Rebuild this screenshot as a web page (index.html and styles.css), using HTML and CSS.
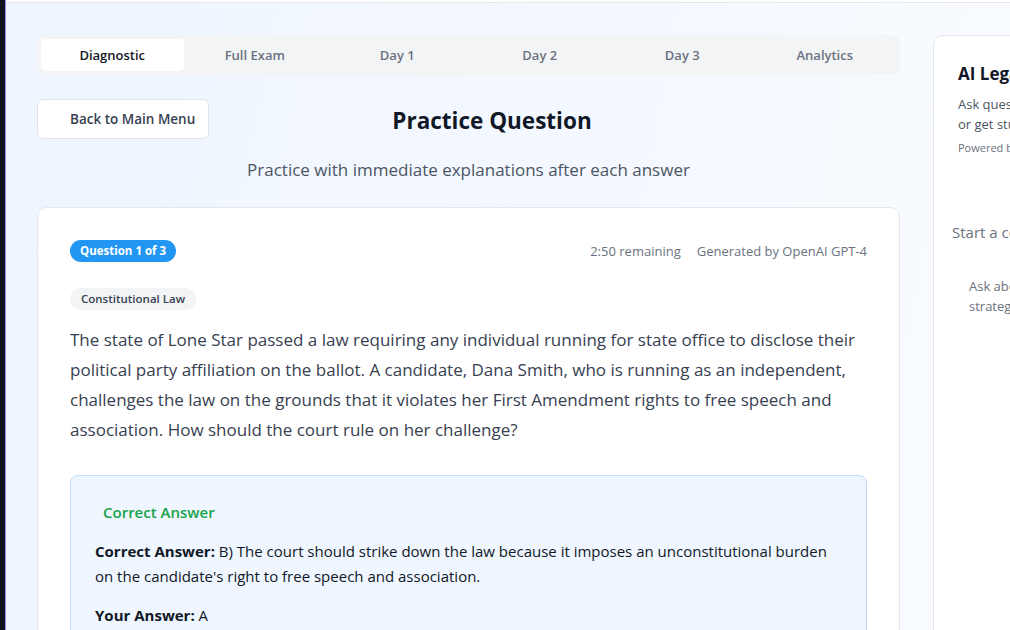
FILE: index.html
```html
<!DOCTYPE html>
<html lang="en">
<head>
<meta charset="utf-8">
<title>Practice Question</title>
<link rel="stylesheet" href="styles.css">
</head>
<body>
<div class="edge-dark"></div>
<div class="edge-accent"></div>
<div class="page">
  <div class="layout">
    <main class="main">
      <nav class="tabs">
        <div class="tab active">Diagnostic</div>
        <div class="tab">Full Exam</div>
        <div class="tab">Day 1</div>
        <div class="tab">Day 2</div>
        <div class="tab">Day 3</div>
        <div class="tab">Analytics</div>
      </nav>
      <div class="header">
        <button class="back-btn">Back to Main Menu</button>
        <h1 class="title">Practice Question</h1>
        <div class="spacer"></div>
      </div>
      <p class="subtitle">Practice with immediate explanations after each answer</p>
      <section class="card">
        <div class="card-head">
          <span class="badge">Question 1 of 3</span>
          <div class="meta">
            <span>2:50 remaining</span>
            <span>Generated by OpenAI GPT-4</span>
          </div>
        </div>
        <span class="chip">Constitutional Law</span>
        <p class="question">The state of Lone Star passed a law requiring any individual running for state office to disclose their political party affiliation on the ballot. A candidate, Dana Smith, who is running as an independent, challenges the law on the grounds that it violates her First Amendment rights to free speech and association. How should the court rule on her challenge?</p>
        <div class="answer">
          <div class="answer-title">Correct Answer</div>
          <p class="answer-line"><strong>Correct Answer:</strong> B) The court should strike down the law because it imposes an unconstitutional burden on the candidate's right to free speech and association.</p>
          <p class="answer-line"><strong>Your Answer:</strong> A</p>
        </div>
      </section>
    </main>
    <aside class="sidebar">
      <div class="side-head">
        <h2 class="side-title">AI Legal Tutor</h2>
        <p class="side-desc">Ask questions about legal concepts and cases,<br>or get study tips</p>
        <p class="side-powered">Powered by OpenAI</p>
      </div>
      <div class="side-body">
        <p class="side-start">Start a conversation with your tutor</p>
        <p class="side-hint">Ask about legal concepts, cases, or exam<br>strategies</p>
      </div>
    </aside>
  </div>
</div>
</body>
</html>
```
FILE: styles.css
```css
* { box-sizing: border-box; }
html, body { height: 100%; }
body {
  margin: 0;
  display: flex;
  overflow: hidden;
  font-family: "Open Sans", "Noto Sans", sans-serif;
  color: #111827;
}
.edge-dark { width: 5px; flex-shrink: 0; background: #12121c; }
.edge-accent { width: 1px; flex-shrink: 0; background: #9d8cf5; }
.page {
  flex: 1;
  min-width: 0;
  border-top: 2px solid #ffffff;
  background: linear-gradient(100deg, #eef5ff 0%, #f4f8ff 50%, #f9fbff 100%);
}
.layout {
  border-top: 1px solid #e6e8ec;
  display: flex;
  gap: 33px;
  padding: 32px 0 0 31px;
}
.main { width: 863px; flex-shrink: 0; }
.tabs {
  display: grid;
  grid-template-columns: repeat(6, 1fr);
  background: #f3f4f6;
  border-radius: 8px;
  padding: 4px;
  height: 40px;
}
.tab {
  display: flex;
  align-items: center;
  justify-content: center;
  font-size: 13px;
  font-weight: 600;
  color: #6b7280;
  border-radius: 5px;
}
.tab.active { background: #ffffff; color: #111827; }
.header {
  display: grid;
  grid-template-columns: auto 1fr 125px;
  align-items: center;
  margin-top: 24px;
}
.back-btn {
  height: 40px;
  width: 172px;
  background: #ffffff;
  border: 1px solid #e2e5ea;
  border-radius: 6px;
  padding: 0 0 1px 32px;
  text-align: left;
  font-family: inherit;
  font-size: 13.5px;
  font-weight: 600;
  color: #374151;
}
.title {
  margin: 0;
  text-align: center;
  font-size: 22.5px;
  font-weight: 700;
  color: #111827;
  line-height: 32px;
  padding-top: 3px;
}
.subtitle {
  margin: 19px 0 0;
  text-align: center;
  font-size: 17px;
  line-height: 24px;
  color: #4b5563;
}
.card {
  margin-top: 25px;
  background: #ffffff;
  border: 1px solid #e5e7eb;
  border-radius: 10px;
  padding: 32px 32px 40px;
}
.card-head {
  display: flex;
  align-items: center;
  justify-content: space-between;
}
.badge {
  background: #2196f3;
  color: #ffffff;
  font-size: 11.5px;
  font-weight: 700;
  height: 22px;
  line-height: 22px;
  padding: 0 10px;
  border-radius: 11px;
}
.meta { display: flex; gap: 16px; font-size: 13px; color: #6b7280; }
.chip {
  display: inline-block;
  margin-top: 26px;
  background: #f3f4f6;
  color: #374151;
  font-size: 11.5px;
  font-weight: 600;
  height: 22px;
  line-height: 22px;
  padding: 0 11px;
  border-radius: 11px;
}
.question {
  margin: 15px 0 0;
  font-size: 17px;
  line-height: 30px;
  color: #374151;
}
.answer {
  margin-top: 30px;
  background: #eff6ff;
  border: 1px solid #bfdbfe;
  border-radius: 8px;
  padding: 24px;
  height: 200px;
}
.answer-title {
  padding-left: 8px;
  font-size: 15px;
  font-weight: 600;
  line-height: 24px;
  color: #16a34a;
}
.answer-line {
  margin: 15px 0 0;
  font-size: 15px;
  line-height: 25px;
  color: #111827;
}
.answer-line + .answer-line { margin-top: 14px; }
.answer-line strong { font-weight: 700; }
.sidebar {
  width: 330px;
  flex-shrink: 0;
  background: #ffffff;
  border: 1px solid #e5e7eb;
  border-radius: 10px;
  height: 640px;
}
.side-head { padding: 24px 24px 20px; }
.side-title {
  margin: 0;
  font-size: 17px;
  font-weight: 700;
  line-height: 28px;
  color: #111827;
}
.side-desc {
  margin: 6px 0 0;
  font-size: 13px;
  line-height: 20px;
  color: #4b5563;
}
.side-powered {
  margin: 6px 0 0;
  font-size: 11px;
  line-height: 16px;
  color: #6b7280;
}
.side-body { padding: 45px 18px 0; }
.side-start {
  margin: 0;
  font-size: 15px;
  line-height: 22px;
  color: #6b7280;
}
.side-hint {
  margin: 33px 0 0;
  padding-left: 17px;
  font-size: 13px;
  line-height: 20px;
  color: #6b7280;
}
```
